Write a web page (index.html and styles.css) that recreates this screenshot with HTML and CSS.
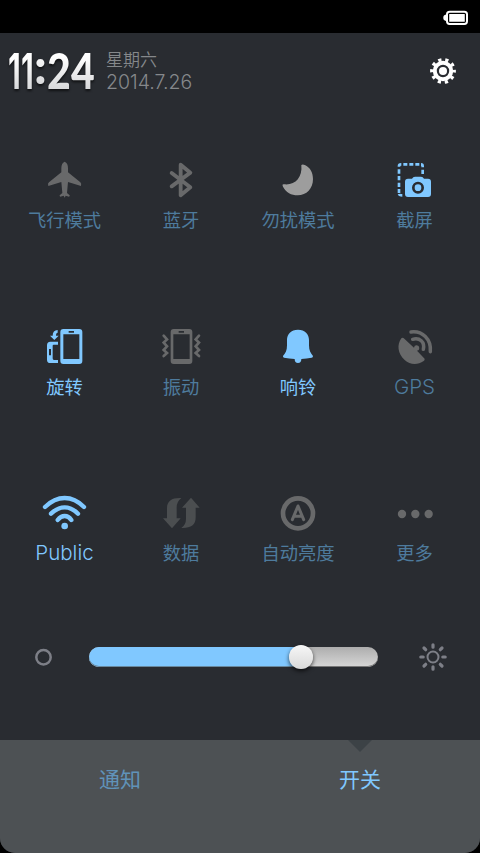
FILE: index.html
```html
<!DOCTYPE html>
<html lang="zh-CN">
<head>
<meta charset="utf-8">
<title>开关</title>
<link rel="stylesheet" href="styles.css">
</head>
<body>
<div class="status">
  <svg class="battery" width="28" height="18" viewBox="0 0 28 18"><rect x="5" y="2.7" width="20" height="12.2" rx="2.6" fill="none" stroke="#fff" stroke-width="2"/><path d="M4 5.5Q1.3 6 1.3 8.8T4 12z" fill="#fff"/><rect x="7.2" y="5" width="15.6" height="7.8" rx=".5" fill="#fff"/></svg>
</div>
<main class="panel">
  <header class="head">
    <div class="clock"><span class="one">1</span><span class="one">1</span><span class="colon">:</span><span class="two">2</span><span class="four">4</span></div>
    <div class="date"><span class="week">星期六</span><span class="day">2014.7.26</span></div>
    <svg class="gear" width="30" height="30" viewBox="-15 -15 30 30"><g fill="none" stroke="#fff"><circle r="8.2" stroke-width="4"/><circle r="11.2" stroke-width="3.4" stroke-dasharray="3.2 3.837" stroke-dashoffset="1.6"/></g><circle r="4" fill="#fff"/></svg>
  </header>
  <section class="grid">
    <div class="cell">
      <svg class="icon" viewBox="123 33 144 144"><path fill="#68696a" d="M194 50Q204 54 204 70V82L241 112Q245 116 243 123L204 111 201 144 209 151Q210 154 207 155L197 152 194 158 191 152 181 155Q178 154 179 151L187 144 184 111 145 123Q142 116 147 112L184 82V70Q184 54 194 50Z"/></svg>
      <span class="label">飞行模式</span>
    </div>
    <div class="cell">
      <svg class="icon" viewBox="471 33 144 144"><path d="M515 84L571 127 542 151V59L571 83 515 124" fill="none" stroke="#68696a" stroke-width="11.5" stroke-linecap="round" stroke-linejoin="round"/></svg>
      <span class="label">蓝牙</span>
    </div>
    <div class="cell">
      <svg class="icon" viewBox="102 33 144 144"><path fill="#9d9d9d" d="M184 60Q188 57 196 61C210 68 219 82 219 102C219 130 200 151 173 151C154 151 138 142 129 125Q125 117 132 118C164 122 188 98 184 60Z"/></svg>
      <span class="label">勿扰模式</span>
    </div>
    <div class="cell">
      <svg class="icon" viewBox="453 33 144 144"><g fill="none" stroke="#80c8ff" stroke-width="8"><path d="M477 65V63Q477 58 483 58H484M490 58H502M508 58H520M526 58H538M543 58Q548 58 548 64V67M548 74V87M477 73V86M477 93V106M477 113V126M477 132V144M477 147Q478 151 487 151"/></g><path fill="#80c8ff" fill-rule="evenodd" d="M504 101H516Q519 95 525 95H543Q549 95 552 101H564Q573 101 573 110V147Q573 156 564 156H504Q495 156 495 147V110Q495 101 504 101ZM534 110A18 18 0 1 0 534 146A18 18 0 1 0 534 110ZM534 118A10 10 0 1 1 534 138A10 10 0 1 1 534 118Z"/></svg>
      <span class="label">截屏</span>
    </div>
    <div class="cell">
      <svg class="icon" viewBox="123 24 144 144"><g fill="#80c8ff"><path fill-rule="evenodd" d="M190 42H238Q247 42 247 51V138Q247 147 238 147H190Q181 147 181 138V51Q181 42 190 42ZM190 58V132H238V58ZM206 48V53H222V48Z"/><path fill-rule="evenodd" d="M151 80H174V89H161Q158 89 158 92V130Q158 135 162 135H174V144H151Q141 144 141 134V91Q141 80 151 80ZM147 102V121H153V102Z"/><path d="M173 45V53Q168 53 168 62H176L163 75 150 62H158Q158 46 173 45Z"/></g></svg>
      <span class="label on">旋转</span>
    </div>
    <div class="cell">
      <svg class="icon" viewBox="471 24 144 144"><path fill="#68696a" fill-rule="evenodd" d="M521 42H568Q577 42 577 51V138Q577 147 568 147H521Q512 147 512 138V51Q512 42 521 42ZM520 58V132H569V58ZM536 48V53H552V48Z"/><path d="M491 62L501 73 491 83 501 94 491 105 501 114 491 123M597 62L587 73 597 83 587 94 597 105 587 114 597 123" fill="none" stroke="#68696a" stroke-width="8" stroke-linecap="round"/></svg>
      <span class="label">振动</span>
    </div>
    <div class="cell">
      <svg class="icon" viewBox="102 24 144 144"><path fill="#80c8ff" d="M174 44C195 44 207 57 207 75V91C207 106 212 115 219 123Q219 128 215 128Q200 131 184 132Q184 144 174 144T164 132Q148 131 132 128Q128 127 129 123C137 115 141 106 141 91V75C141 57 153 44 174 44Z"/></svg>
      <span class="label on">响铃</span>
    </div>
    <div class="cell">
      <svg class="icon" viewBox="453 24 144 144"><path fill="#68696a" d="M484 70Q488 66 493 71L522 98A8 8 0 1 1 531 107L551 128Q557 133 551 138C533 151 510 150 494 135C473 116 470 89 484 70Z"/><path d="M513 51C547 47 574 72 571 110M518 73C539 67 555 81 550 103" fill="none" stroke="#68696a" stroke-width="10.5" stroke-linecap="round"/></svg>
      <span class="label latin">GPS</span>
    </div>
    <div class="cell">
      <svg class="icon" viewBox="123 27 144 144"><g fill="none" stroke="#80c8ff" stroke-width="13" stroke-linecap="round"><path d="M135 81Q163 54 194 54T252 81M153 101Q173 82 194 82T234 101M173 120Q182 108 194 108T214 120"/></g><circle cx="194" cy="138" r="10" fill="#80c8ff"/></svg>
      <span class="label latin on">Public</span>
    </div>
    <div class="cell">
      <svg class="icon" viewBox="471 27 144 144"><path fill="#4b4e50" d="M544 54Q530 65 530 82V115H542L516 145 489 115H501V85C501 62 516 53 544 54ZM573 53L599 83H587V112C587 136 572 145 544 144Q558 134 558 116V83H546Z"/></svg>
      <span class="label">数据</span>
    </div>
    <div class="cell">
      <svg class="icon" viewBox="102 27 144 144"><g fill="none" stroke="#68696a" stroke-linecap="round" stroke-linejoin="round"><circle cx="174" cy="100" r="45" stroke-width="14"/><path d="M157 119L174 78 191 119M163 109H185" stroke-width="9"/></g></svg>
      <span class="label">自动亮度</span>
    </div>
    <div class="cell">
      <svg class="icon" viewBox="453 27 144 144"><g fill="#68696a"><circle cx="486" cy="102" r="12.5"/><circle cx="526" cy="102" r="12.5"/><circle cx="566" cy="102" r="12.5"/></g></svg>
      <span class="label">更多</span>
    </div>
  </section>
  <div class="brightness">
    <svg class="dim" width="20" height="20" viewBox="0 0 20 20"><circle cx="10.5" cy="10.3" r="7.2" fill="none" stroke="#7d7f87" stroke-width="2.5"/></svg>
    <div class="track"><div class="fill"></div><div class="thumb"></div></div>
    <svg class="sun" width="30" height="30" viewBox="-15 -15 30 30"><g fill="none" stroke="#7d7f87"><circle r="5.5" stroke-width="2"/><path stroke-width="3.2" stroke-linecap="round" d="M0-12.2V-9.8M0 12.2V9.8M-12.2 0H-9.8M12.2 0H9.8M-9-9L-7.3-7.3M9 9L7.3 7.3M-9 9L-7.3 7.3M9-9L7.3-7.3"/></g></svg>
  </div>
  <nav class="tabs">
    <div class="tab">通知</div>
    <div class="tab active">开关</div>
  </nav>
</main>
</body>
</html>
```

FILE: styles.css
```css
* { box-sizing: border-box; }
body {
  margin: 0;
  width: 480px;
  height: 853px;
  overflow: hidden;
  background: #000;
  font-family: "Liberation Sans", "Noto Sans CJK SC", sans-serif;
}
svg { display: block; }
.status {
  height: 33px;
  display: flex;
  justify-content: flex-end;
  padding: 9px 10px 0 0;
}
.panel {
  height: 820px;
  display: flex;
  flex-direction: column;
  background: #292c31;
  border-radius: 0 0 15px 15px;
  overflow: hidden;
}
.head {
  height: 123px;
  display: flex;
  align-items: flex-start;
  padding: 15px 22px 0 8px;
}
.clock {
  display: flex;
  height: 44px;
  width: 97px;
  font: 900 50px/44px Lato, sans-serif;
  filter: drop-shadow(0 2px 1px rgba(0, 0, 0, .6));
}
.clock span {
  height: 44px;
  white-space: nowrap;
  transform-origin: 0 0;
  background: linear-gradient(#fff 20%, #d9dadc 90%);
  -webkit-background-clip: text;
  background-clip: text;
  color: transparent;
}
.one {
  width: 22px;
  margin-right: -9px;
  font-family: Inter, sans-serif;
  font-weight: 700;
  transform: translateY(1px) scaleX(.59);
}
.colon { width: 13px; transform: translateY(-5px) scaleX(.98); }
.two { width: 29px; margin-right: -5px; transform: scaleX(.82); }
.four { width: 29px; transform: scaleX(.82); }
.date {
  display: flex;
  flex-direction: column;
  padding-left: 1px;
  color: #85888b;
}
.week {
  font: 350 17px/22px "Noto Sans CJK SC", sans-serif;
}
.day { font: 300 19.5px/25px Inter, sans-serif; }
.gear { margin: 8px 0 0 auto; }
.grid {
  display: grid;
  grid-template-columns: 117px 116px 118px 115px;
  grid-template-rows: 167px 166px 144px;
  padding-left: 6px;
}
.cell {
  display: flex;
  flex-direction: column;
  align-items: center;
}
.icon { width: 48px; height: 48px; }
.label {
  margin-top: 3px;
  color: #4e7b9d;
  font: 400 18.3px/24px "Noto Sans CJK SC", sans-serif;
  white-space: nowrap;
}
.latin {
  margin-top: 4px;
  font: 300 20.5px/24px Inter, sans-serif;
}
.on { color: #80c8ff; }
.brightness {
  height: 48px;
  display: flex;
  align-items: center;
  padding: 0 32px 0 33px;
}
.track {
  position: relative;
  width: 289px;
  height: 20px;
  margin-left: 36px;
  border-radius: 10px;
  background: linear-gradient(#adadad, #d7d7d7);
  box-shadow: inset 0 -1px #777;
}
.fill {
  width: 212px;
  height: 20px;
  border-radius: 10px 0 0 10px;
  background: #80c8ff;
  box-shadow: inset 0 -1px #68899f;
}
.thumb {
  position: absolute;
  left: 200px;
  top: -2px;
  width: 24px;
  height: 24px;
  border-radius: 50%;
  background: linear-gradient(#f7f7f7, #d9d9d9);
  box-shadow: 0 2px 4px rgba(0, 0, 0, .7);
}
.sun { margin-left: auto; }
.tabs {
  flex: 1;
  display: flex;
  margin-top: 59px;
  background: #4d5154;
}
.tab {
  position: relative;
  width: 240px;
  padding-top: 23px;
  text-align: center;
  font: 400 21px/30px "Noto Sans CJK SC", sans-serif;
  color: #6093b9;
}
.active { color: #80c8ff; }
.active::before {
  content: "";
  position: absolute;
  left: 108px;
  top: 0;
  border: 12px solid transparent;
  border-top-color: #3c4246;
  border-bottom: 0;
}
```
